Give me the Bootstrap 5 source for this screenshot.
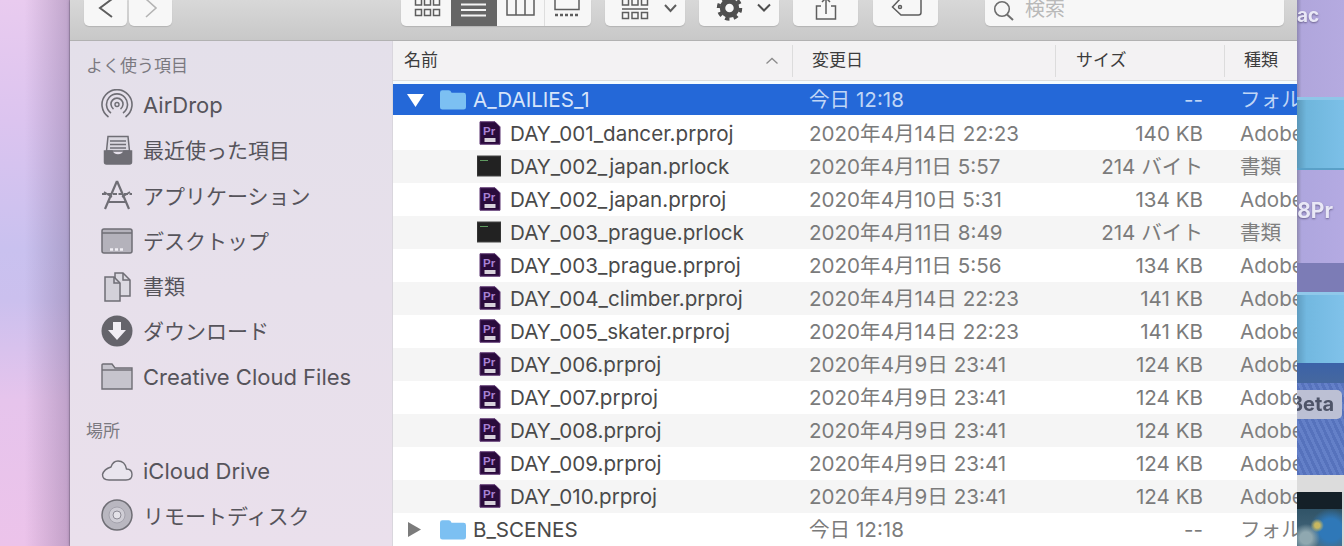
<!DOCTYPE html>
<html lang="ja">
<head>
    <meta charset="UTF-8">
    <meta name="viewport" content="width=device-width, initial-scale=1.0">
    <title>Finder</title>
    <link href="https://cdn.jsdelivr.net/npm/bootstrap@5.3.0/dist/css/bootstrap.min.css" rel="stylesheet">
    <style>
        html, body { height: 546px; overflow: hidden; }
        body {
            font-family: "Inter", "Liberation Sans", "Noto Sans CJK JP", sans-serif;
            background: #d9c4e4;
            filter: blur(.5px);
        }
        .desk-left {
            width: 70px;
            flex: none;
            background:
                linear-gradient(90deg, rgba(120, 90, 130, 0) 35%, rgba(110, 90, 130, .32) 98%, rgba(90, 80, 100, .55) 100%),
                linear-gradient(180deg, #e9cbef 0, #dcc4ef 120px, #c9c1ef 250px, #cbc0ee 300px, #e6c4ec 400px, #ecc3ea 546px);
        }
        .desk-right { width: 47px; flex: none; color: #e9e8f6; font-weight: 700; font-size: 19px; text-shadow: 0 1px 2px rgba(60, 50, 90, .6); overflow: hidden; }
        .band { overflow: hidden; white-space: nowrap; flex: none; }
        .band-a { height: 97px; background: linear-gradient(90deg, #8f88b4, #b0a6dc 10%, #b5aae0); line-height: 32px; }
        .band-b { height: 73px; background: linear-gradient(90deg, #5b97b8, #6fb6dc 20%, #7cc0e8); border-top: 3px solid #8fc6e8; border-bottom: 2px solid #5aa0c8; }
        .band-c { height: 93px; background: linear-gradient(90deg, #8f8ab0, #aea6de 10%, #b4aae2); line-height: 24px; padding: 29px 11px 0 0; font-size: 21px; }
        .band-d { height: 29px; background: #7c7cb6; }
        .band-e { height: 71px; background: linear-gradient(90deg, #5f9cc0, #72b8e0 20%, #80c2ea); border-top: 3px solid #90c8ea; }
        .band-f { height: 20px; background: linear-gradient(#3c62a8, #46689f); }
        .band-g {
            height: 92px;
            padding-top: 7px;
            background: repeating-linear-gradient(65deg, #5672bc 0 3px, #6480c8 3px 6px);
        }
        .beta-label {
            height: 29px;
            width: 45px;
            line-height: 29px;
            border-radius: 0 5px 5px 0;
            background: #bcc0d4;
            color: #4e5468;
            text-shadow: none;
            font-size: 20px;
        }
        .band-h { height: 17px; background: #dcdcdc; }
        .band-i { height: 54px; background: #d8d8d8; padding-right: 2px; }
        .thumb-pic {
            height: 100%;
            background:
                linear-gradient(#142028 0 32%, rgba(0, 0, 0, 0) 32%),
                radial-gradient(circle at 45% 62%, #c8b860 0 6%, rgba(0, 0, 0, 0) 16%),
                radial-gradient(circle at 20% 85%, #8fa8b0 0 10%, rgba(0, 0, 0, 0) 24%),
                radial-gradient(circle at 75% 70%, #2f78b8 0 22%, rgba(0, 0, 0, 0) 42%),
                linear-gradient(#24485c, #4a6c80);
        }

        .finder { width: 1227px; flex: none; height: 546px; box-shadow: 0 0 3px rgba(60, 50, 80, .5); }
        .tool-bar {
            height: 41px;
            flex: none;
            padding-left: 14px;
            background: linear-gradient(#d8d8d8, #c8c8c8);
            border-bottom: 1px solid #b2b2b2;
            overflow: hidden;
        }
        .tool-btn {
            height: 26px;
            flex: none;
            background: #f7f7f7;
            border-radius: 0 0 5px 5px;
            box-shadow: 0 1px 1px #b4b4b4;
            color: #5e5e5e;
            overflow: hidden;
        }
        .tool-btn svg { display: block; flex: none; }
        .btn-gap-2 { margin-left: 2px; }
        .btn-gap-view { margin-left: 229px; }
        .btn-gap-14 { margin-left: 14px; }
        .btn-gap-15 { margin-left: 15px; }
        .btn-gap-search { margin-left: 47px; }
        .view-on { background: #666; color: #f4f4f4; }
        .view-sep { border-left: 1px solid #dedede; }
        .search-box { width: 299px; color: #b9b9b9; font-size: 20px; line-height: 18px; }

        .side-bar {
            width: 323px;
            flex: none;
            background: linear-gradient(#e4e0ea, #eae0ec);
            border-right: 1px solid #d9d6dd;
            font-size: 21px;
            color: #56545b;
        }
        .side-title { font-size: 17px; color: #7b7980; height: 41.4px; padding: 11px 0 0 16px; }
        .side-title-next { height: 48.8px; padding-top: 18px; }
        .side-row { height: 45.2px; padding: 2px 0 0 31px; gap: 10px; white-space: nowrap; }
        .side-row svg { flex: none; margin-top: -2px; }
        .side-latin { font-size: 22px; }

        .file-pane { width: 904px; flex: none; overflow: hidden; background: #fff; }
        .file-head { height: 40px; background: #f3f2f3; font-size: 17px; color: #3c3c3c; border-bottom: 1px solid #dedede; }
        .head-name { width: 400px; padding: 0 14px 0 11px; }
        .head-date { width: 263px; padding-left: 19px; }
        .head-size { width: 169px; padding-left: 20px; }
        .head-kind { padding-left: 19px; }
        .head-cell { height: 32px; border-right: 1px solid #dcdcdc; }
        .file-gap { height: 3px; background: #f4fbff; }
        .file-row { height: 33px; padding-top: 2px; font-size: 20.6px; color: #4a4a4a; background: #fff; white-space: nowrap; }
        .file-row.alt { background: #f5f5f5; }
        .file-row.sel { background: #2468d8; color: #d6e4fa; height: 31px; margin-bottom: 2px; }
        .file-row svg { margin-top: -2px; }
        .cell-name { width: 400px; flex: none; }
        .cell-date { width: 262px; flex: none; color: #7b7b7b; padding-left: 16px; }
        .cell-size { width: 148px; flex: none; color: #7b7b7b; text-align: right; }
        .cell-kind { width: 94px; flex: none; color: #7f7f7f; padding-left: 37px; overflow: hidden; }
        .sel .cell-date, .sel .cell-size, .sel .cell-kind { color: #c0d6f6; }
        .twist { width: 47px; flex: none; padding-left: 14px; }
        .file-ico { margin: 0 9px 0 84px; flex: none; }
        .folder-ico { margin-right: 7px; flex: none; }
    </style>
</head>
<body class="d-flex">
    <!-- icons used more than once -->
    <svg width="0" height="0" class="position-absolute">
        <symbol id="ico-pr" viewBox="0 0 24 24">
            <path d="M3 .8H18L23 5.800V23.200H3Z" fill="#2a0b3c" stroke="#5a3270"/>
            <text x="6" y="13.500" font-family="Liberation Sans" font-size="11.500" font-weight="700" fill="#a882d2">Pr</text>
            <rect x="7.500" y="17" width="11" height="4" fill="#d8d2dc"/>
        </symbol>
        <symbol id="ico-lock" viewBox="0 0 24 24">
            <rect x="0" y="2" width="24" height="20" fill="#222" stroke="#444"/>
            <rect x="3" y="6" width="8" height="1" fill="#5f9a60"/>
        </symbol>
        <symbol id="ico-folder" viewBox="0 0 27 21">
            <path d="M0 3.500Q0 1 2.500 1H9Q11 1 12 3.500H24.500Q27 3.500 27 6V18.500Q27 21 24.500 21H2.500Q0 21 0 18.500Z" fill="#7cc0f2"/>
        </symbol>
    </svg>

    <div class="desk-left"></div>

    <div class="finder d-flex flex-column">
        <div class="tool-bar d-flex align-items-start">
            <div class="tool-btn">
                <svg width="43" height="26" fill="none" stroke="currentColor" stroke-width="2"><path d="M28 -1L16 8L28 17"/></svg>
            </div>
            <div class="tool-btn btn-gap-2">
                <svg width="43" height="26" fill="none" stroke="#b4b4b4" stroke-width="1.600"><path d="M17 -1L27 8L17 17"/></svg>
            </div>
            <div class="tool-btn d-flex btn-gap-view">
                <svg width="50" height="26" fill="none" stroke="currentColor" stroke-width="1.500">
                    <path d="M14.500 -1h6v6h-6zM23.500 -1h6v6h-6zM32.500 -1h6v6h-6zM14.500 9.500h6v6h-6zM23.500 9.500h6v6h-6zM32.500 9.500h6v6h-6z"/>
                </svg>
                <div class="view-on">
                    <svg width="46" height="26" stroke="currentColor" stroke-width="2"><path d="M10 4.500H35M10 10H35M10 15.500H35"/></svg>
                </div>
                <svg width="47" height="26" fill="none" stroke="currentColor" stroke-width="1.500"><path d="M10 -2H37V15H10ZM19 -2V15M28 -2V15"/></svg>
                <div class="view-sep">
                    <svg width="46" height="26" fill="none" stroke="currentColor" stroke-width="1.500">
                        <path d="M10 -3H34V9.500H10Z"/>
                        <path d="M10 15H34" stroke-width="2.500" stroke-dasharray="3 2"/>
                    </svg>
                </div>
            </div>
            <div class="tool-btn btn-gap-14">
                <svg width="80" height="26" fill="none" stroke="currentColor" stroke-width="1.500">
                    <path d="M17.500 -1h6v6h-6zM27 -1h6v6h-6zM36.500 -1h6v6h-6zM17.500 12.500h6v6h-6zM27 12.500h6v6h-6zM36.500 12.500h6v6h-6zM17 9H43"/>
                    <path d="M60 5L65.500 11L71 5" stroke-width="2"/>
                </svg>
            </div>
            <div class="tool-btn btn-gap-14">
                <svg width="80" height="26" fill="none" stroke="#4f4f4f">
                    <circle cx="30.500" cy="8" r="11" stroke-width="3.500" stroke-dasharray="4.400 4.200"/>
                    <circle cx="30.500" cy="8" r="7" stroke-width="5.500"/>
                    <path d="M59 4.500L65 10.500L71 4.500" stroke-width="2"/>
                </svg>
            </div>
            <div class="tool-btn btn-gap-14">
                <svg width="65" height="26" fill="none" stroke="currentColor" stroke-width="1.500"><path d="M28 6H23.500V19H42.500V6H38M33 14V-1M29 2L33 -2L37 2"/></svg>
            </div>
            <div class="tool-btn btn-gap-15">
                <svg width="65" height="26" fill="none" stroke="currentColor" stroke-width="1.500">
                    <path d="M28 -2H45.500Q48 -2 48 .5V12.500Q48 15 45.500 15H28L19.500 7Z"/>
                    <circle cx="27" cy="7" r="1.500"/>
                </svg>
            </div>
            <div class="tool-btn search-box btn-gap-search d-flex">
                <svg width="40" height="26" fill="none" stroke="#6e6e6e" stroke-width="1.600"><circle cx="17" cy="9" r="7.300"/><path d="M22 14.500L28 20" stroke-width="2"/></svg>
                <span>検索</span>
            </div>
        </div>

        <div class="d-flex flex-grow-1 overflow-hidden">
            <div class="side-bar">
                <div class="side-title d-flex align-items-center">よく使う項目</div>
                <div class="side-row side-latin d-flex align-items-center">
                    <svg width="32" height="32" fill="none" stroke="#6f6e75" stroke-width="1.600">
                        <path d="M7.500 28A15 15 0 1 1 24.500 28M10 24A10.500 10.500 0 1 1 22 24M12.500 20A6 6 0 1 1 19.500 20"/>
                        <circle cx="16" cy="15.500" r="2" stroke-width="1.400"/>
                    </svg>AirDrop
                </div>
                <div class="side-row d-flex align-items-center">
                    <svg width="32" height="32" fill="none" stroke="#6f6e75" stroke-width="1.500">
                        <path d="M7 2.500H27L28.500 17H5.500Z" fill="#dad8e0"/>
                        <path d="M9 7H25M9 10.500H25M9 14H25"/>
                        <path d="M3.500 17H11Q12 21 17 21T23 17H30.500V28Q30.500 30 28.500 30H5.500Q3.500 30 3.500 28Z" fill="#6f6e75"/>
                    </svg>最近使った項目
                </div>
                <div class="side-row d-flex align-items-center">
                    <svg width="32" height="32" fill="none" stroke="#6f6e75" stroke-width="2.200">
                        <path d="M16 2L4 30M16 2L28 30M8 23H25"/>
                        <path d="M1 15H31" stroke-width="2" stroke-dasharray="4 1.500"/>
                        <path d="M3 13L11 18M29 13L21 18" stroke-width="1.600"/>
                    </svg>アプリケーション
                </div>
                <div class="side-row d-flex align-items-center">
                    <svg width="32" height="32" stroke="#6f6e75" stroke-width="1.500">
                        <rect x="1" y="4" width="30" height="24" rx="2" fill="#b4b2bb"/>
                        <path d="M1 8H31"/>
                        <path d="M9 24.500H23" stroke="#f0eef4" stroke-width="2.500" stroke-dasharray="3 2"/>
                    </svg>デスクトップ
                </div>
                <div class="side-row d-flex align-items-center">
                    <svg width="32" height="32" stroke="#6f6e75" stroke-width="1.500">
                        <path d="M14 3H22L29 10V26H14Z" fill="#dcdae2"/>
                        <path d="M4 7H13L19 13V31H4Z" fill="#d3d1d9"/>
                        <path d="M13 7V13H19M22 3V10H29" fill="none"/>
                    </svg>書類
                </div>
                <div class="side-row d-flex align-items-center">
                    <svg width="32" height="32">
                        <circle cx="16" cy="16" r="15.500" fill="#65646b"/>
                        <path d="M12 7H20V15H25L16 25L7 15H12Z" fill="#f1eef4"/>
                    </svg>ダウンロード
                </div>
                <div class="side-row side-latin d-flex align-items-center">
                    <svg width="32" height="32" stroke="#6f6e75" stroke-width="1.400">
                        <path d="M1 5Q1 4 2 4H11L14 8H31V29H1Z" fill="#c6c4cd"/>
                        <path d="M1 10H31" fill="none"/>
                    </svg>Creative Cloud Files
                </div>
                <div class="side-title side-title-next d-flex align-items-center">場所</div>
                <div class="side-row side-latin d-flex align-items-center">
                    <svg width="32" height="32" fill="#e9e5ee" stroke="#6f6e75" stroke-width="1.400">
                        <path d="M8 26H25Q31 26 31 20.500T25.500 15Q24 7 17 7Q12 7 10 13Q3 15 1.500 20.500Q1.500 26 8 26Z"/>
                    </svg>iCloud Drive
                </div>
                <div class="side-row d-flex align-items-center">
                    <svg width="32" height="32" stroke="#6f6e75">
                        <circle cx="16" cy="16" r="15" fill="#b9b7c0" stroke-width="1.500"/>
                        <circle cx="16" cy="16" r="8" fill="#cfcdd5" stroke="#a5a3ad"/>
                        <circle cx="16" cy="16" r="4" fill="#e4e2e8" stroke="#8d8b95"/>
                    </svg>リモートディスク
                </div>
            </div>

            <div class="file-pane">
                <div class="file-head d-flex align-items-center">
                    <div class="head-cell head-name d-flex align-items-center justify-content-between">
                        <span>名前</span>
                        <svg width="12" height="8" fill="none" stroke="#8c8c8c" stroke-width="1.300"><path d="M.5 6.500L6 1.500L11.500 6.500"/></svg>
                    </div>
                    <div class="head-cell head-date d-flex align-items-center">変更日</div>
                    <div class="head-cell head-size d-flex align-items-center">サイズ</div>
                    <div class="head-kind">種類</div>
                </div>
                <div class="file-gap"></div>
                <div id="fileRows"></div>
            </div>
        </div>
    </div>

    <div class="desk-right d-flex flex-column">
        <div class="band band-a">ac</div>
        <div class="band band-b"></div>
        <div class="band band-c d-flex align-items-start justify-content-end">8Pr</div>
        <div class="band band-d"></div>
        <div class="band band-e"></div>
        <div class="band band-f"></div>
        <div class="band band-g"><div class="beta-label d-flex justify-content-end pe-2">Beta</div></div>
        <div class="band band-h"></div>
        <div class="band band-i"><div class="thumb-pic"></div></div>
    </div>

    <script src="https://cdn.jsdelivr.net/npm/bootstrap@5.3.0/dist/js/bootstrap.bundle.min.js"></script>
    <script>
        const PR = 'Adobe Premiere Pro Project';
        const files = [
            ['DAY_001_dancer.prproj', '2020年4月14日 22:23', '140 KB', PR],
            ['DAY_002_japan.prlock', '2020年4月11日 5:57', '214 バイト', '書類'],
            ['DAY_002_japan.prproj', '2020年4月10日 5:31', '134 KB', PR],
            ['DAY_003_prague.prlock', '2020年4月11日 8:49', '214 バイト', '書類'],
            ['DAY_003_prague.prproj', '2020年4月11日 5:56', '134 KB', PR],
            ['DAY_004_climber.prproj', '2020年4月14日 22:23', '141 KB', PR],
            ['DAY_005_skater.prproj', '2020年4月14日 22:23', '141 KB', PR],
            ['DAY_006.prproj', '2020年4月9日 23:41', '124 KB', PR],
            ['DAY_007.prproj', '2020年4月9日 23:41', '124 KB', PR],
            ['DAY_008.prproj', '2020年4月9日 23:41', '124 KB', PR],
            ['DAY_009.prproj', '2020年4月9日 23:41', '124 KB', PR],
            ['DAY_010.prproj', '2020年4月9日 23:41', '124 KB', PR]
        ];

        function folderRow(name, open) {
            const arrow = open
                ? '<svg width="18" height="14" fill="#fff"><path d="M0 1H17L8.500 14Z"/></svg>'
                : '<svg width="14" height="15" fill="#7b7b7b"><path d="M1 0L14 7.500L1 15Z"/></svg>';
            return `
                <div class="file-row ${open ? 'sel' : ''} d-flex align-items-center">
                    <div class="cell-name d-flex align-items-center">
                        <div class="twist d-flex align-items-center">${arrow}</div>
                        <svg class="folder-ico" width="26" height="21"><use href="#ico-folder"/></svg>${name}
                    </div>
                    <div class="cell-date">今日 12:18</div>
                    <div class="cell-size">--</div>
                    <div class="cell-kind">フォルダ</div>
                </div>`;
        }

        let html = folderRow('A_DAILIES_1', true);
        files.forEach((f, i) => {
            const icon = f[0].endsWith('.prlock') ? 'ico-lock' : 'ico-pr';
            html += `
                <div class="file-row ${i % 2 ? 'alt' : ''} d-flex align-items-center">
                    <div class="cell-name d-flex align-items-center">
                        <svg class="file-ico" width="24" height="24"><use href="#${icon}"/></svg>${f[0]}
                    </div>
                    <div class="cell-date">${f[1]}</div>
                    <div class="cell-size">${f[2]}</div>
                    <div class="cell-kind">${f[3]}</div>
                </div>`;
        });
        html += folderRow('B_SCENES', false);
        document.getElementById('fileRows').innerHTML = html;
    </script>
</body>
</html>
